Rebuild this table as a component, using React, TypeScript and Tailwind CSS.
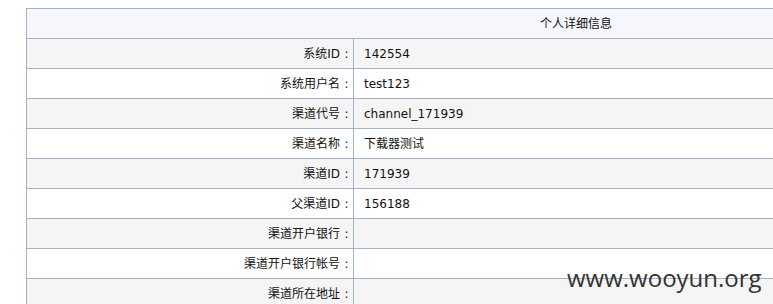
import React from "react";

const rows: [string, string][] = [
  ["系统ID", "142554"],
  ["系统用户名", "test123"],
  ["渠道代号", "channel_171939"],
  ["渠道名称", "下载器测试"],
  ["渠道ID", "171939"],
  ["父渠道ID", "156188"],
  ["渠道开户银行", ""],
  ["渠道开户银行帐号", ""],
  ["渠道所在地址", ""],
  ["联系人", ""],
];

export default function App() {
  return (
    <div
      className="relative w-[773px] h-[304px] overflow-hidden bg-white pl-[26px] pt-[8px] text-[12px] text-[#111]"
      style={{ fontFamily: '"DejaVu Sans", "Noto Sans CJK SC", sans-serif' }}
    >
      <table className="w-[1100px] border-collapse table-fixed">
        <colgroup>
          <col className="w-[327px]" />
          <col />
        </colgroup>
        <tbody>
          <tr className="h-[30px] bg-[#f5f7fc]">
            <td colSpan={2} className="border border-[#a0b3c8] text-center align-middle">
              个人详细信息
            </td>
          </tr>
          {rows.map(([k, v], i) => (
            <tr key={i} className={`h-[30px] ${i % 2 === 0 ? "bg-[#f5f5f5]" : "bg-white"}`}>
              <td className="border border-[#a0b3c8] text-right align-middle pr-0">
                {k}
                <span className="inline-block w-[13px] text-center">:</span>
              </td>
              <td className="border border-[#a0b3c8] text-left align-middle pl-[10px]">{v}</td>
            </tr>
          ))}
        </tbody>
      </table>
      <div
        className="absolute left-[567px] top-[260px] text-[24px] text-[#333]"
        style={{ fontFamily: '"Open Sans", "DejaVu Sans", sans-serif' }}
      >
        www.wooyun.org
      </div>
    </div>
  );
}
